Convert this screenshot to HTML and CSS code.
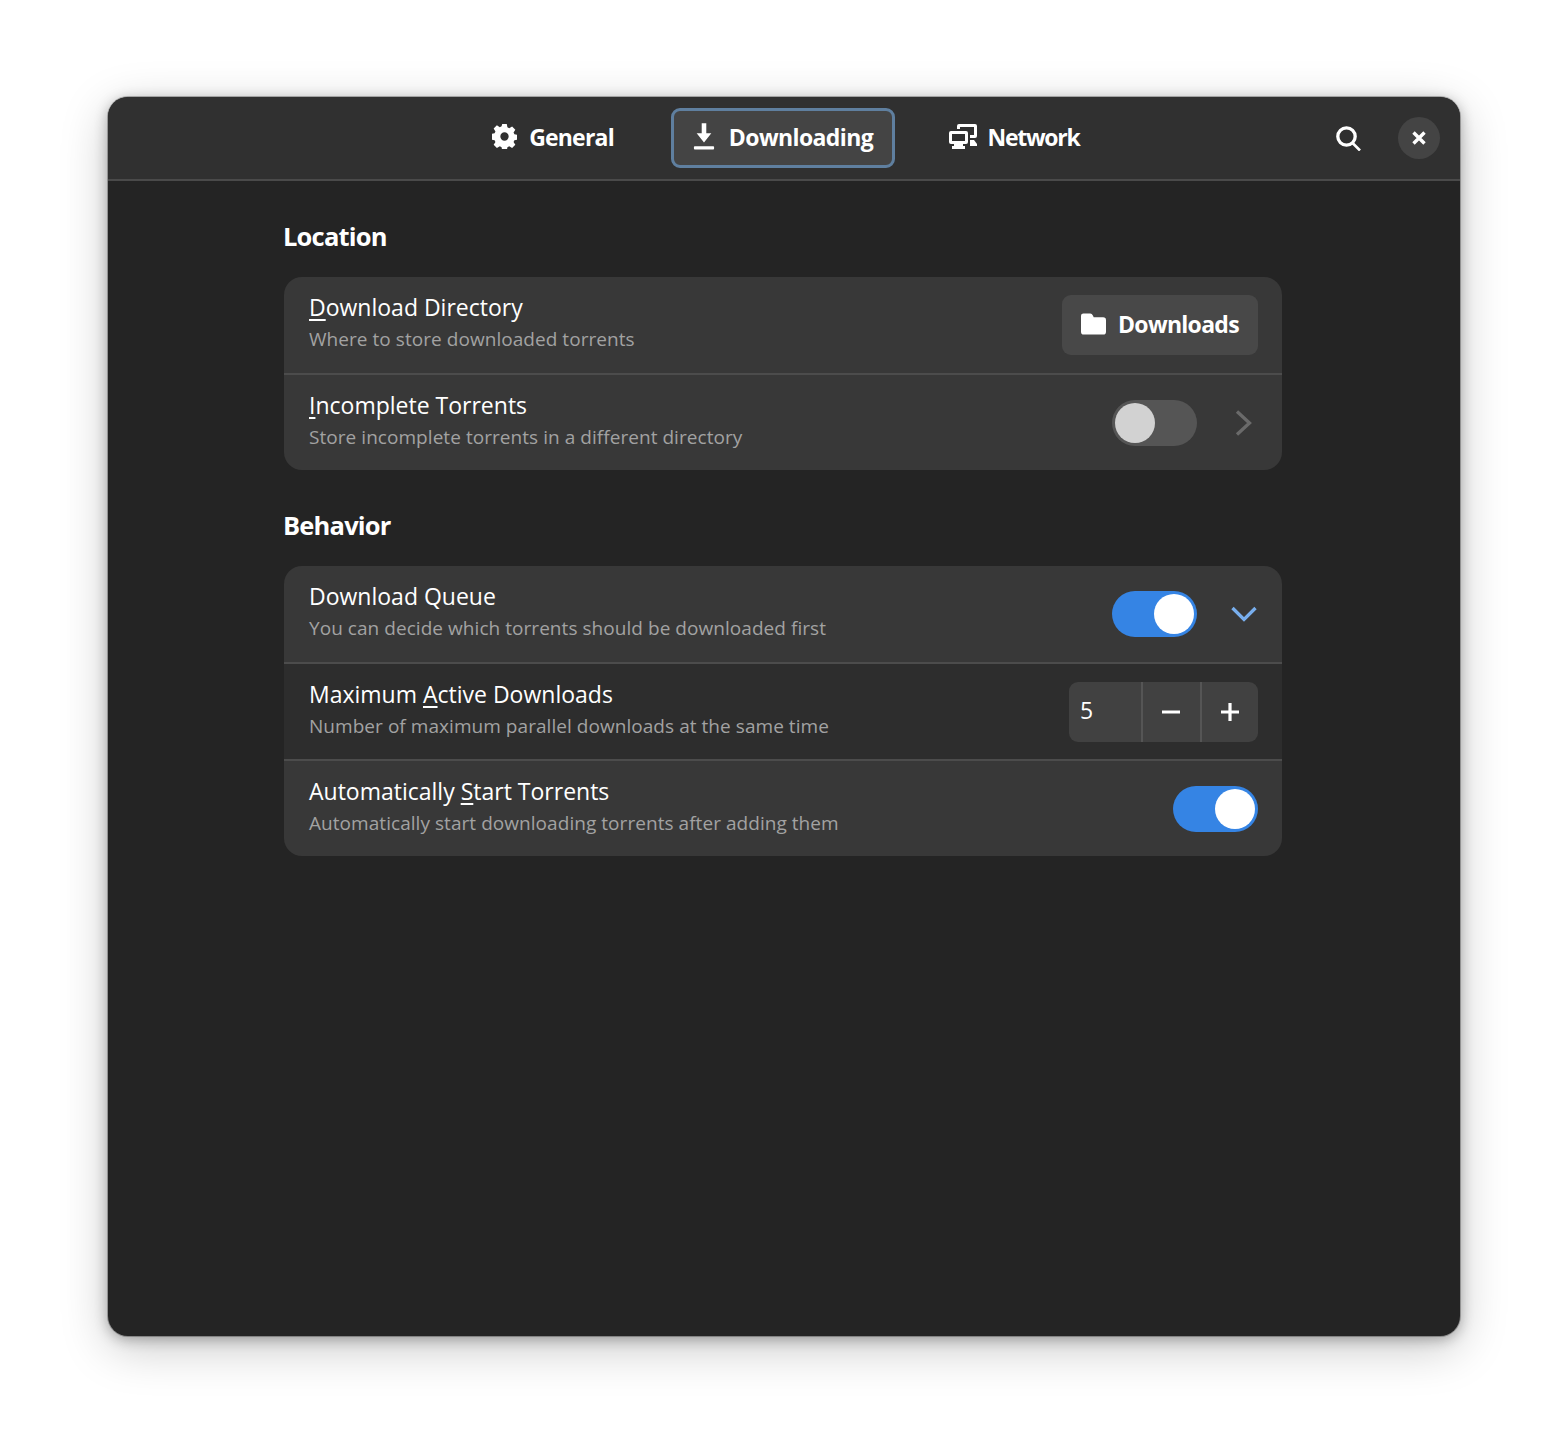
FILE: index.html
```html
<!DOCTYPE html>
<html lang="en">
<head>
    <meta charset="UTF-8">
    <meta name="viewport" content="width=device-width, initial-scale=1.0">
    <title>Preferences</title>
    <link rel="stylesheet" href="styles.css">
</head>
<body>
    <div class="window">
        <header class="headerbar">
            <div class="tabs">
                <button class="tab">
                    <svg class="tab-icon" viewBox="0 0 24 24"><path fill-rule="evenodd" d="M9.8 0h4.4l.6 3.2 1.7.8 2.8-1.7 3.1 3.1-1.7 2.8.8 1.7 3 .6v4.400l-3 .6-.8 1.700 1.700 2.800-3.100 3.100-2.800-1.700-1.700.8-.6 3.300H9.800l-.6-3.300-1.700-.8-2.800 1.700-3.100-3.100 1.700-2.800-.8-1.700-3-.6V9.500l3-.6.8-1.700-1.700-2.800 3.100-3.100 2.800 1.700 1.700-.8zM12 8a4 4 0 1 0 0 8 4 4 0 0 0 0-8z"/></svg>
                    General
                </button>
                <button class="tab tab-active">
                    <svg class="tab-icon" viewBox="0 0 24 30"><path d="M9.500 0h5v11H20L12 21 4 11h5.500z"/><rect x="1" y="25" width="22" height="3.500" rx="1"/></svg>
                    Downloading
                </button>
                <button class="tab tab-net">
                    <svg class="tab-icon tab-icon-net" viewBox="0 0 28 25"><path fill-rule="evenodd" d="M2 7h15a2 2 0 0 1 2 2v9a2 2 0 0 1-2 2h-3v2h2v3H3v-3h2v-2H2a2 2 0 0 1-2-2V9a2 2 0 0 1 2-2zm1 3v7h13v-7z"/><path d="M10 0h16a2 2 0 0 1 2 2v10a2 2 0 0 1-2 2h-5v-3h4V3H11v2H8V2a2 2 0 0 1 2-2zM21 16h4l3 4v2h-7z"/></svg>
                    Network
                </button>
            </div>
            <div class="header-actions">
                <svg class="search-icon" viewBox="0 0 25 25"><circle cx="10.500" cy="10.500" r="8.700"/><path class="search-handle" d="M16.500 17l7.500 7.500"/></svg>
                <button class="close-btn">
                    <svg viewBox="0 0 14 14"><path d="M1.500 1.500l11 11M12.500 1.500l-11 11"/></svg>
                </button>
            </div>
        </header>

        <main class="content">
            <section class="group">
                <h2 class="group-title">Location</h2>
                <div class="card">
                    <div class="row">
                        <div class="row-text">
                            <div class="row-title"><u>D</u>ownload Directory</div>
                            <div class="row-sub">Where to store downloaded torrents</div>
                        </div>
                        <button class="folder-btn">
                            <svg viewBox="0 0 26 22"><path d="M2.500 0h7c1.500 0 2 .7 3 2.500l.7 1.500H23a3 3 0 0 1 3 3v12a3 3 0 0 1-3 3H3a3 3 0 0 1-3-3V2.500A2.500 2.500 0 0 1 2.500 0z"/></svg>
                            Downloads
                        </button>
                    </div>
                    <div class="row">
                        <div class="row-text">
                            <div class="row-title"><u>I</u>ncomplete Torrents</div>
                            <div class="row-sub">Store incomplete torrents in a different directory</div>
                        </div>
                        <div class="switch"><span class="knob"></span></div>
                        <svg class="chevron" viewBox="0 0 26 26"><path d="M6 1.500L18.500 13 6 24.500"/></svg>
                    </div>
                </div>
            </section>

            <section class="group">
                <h2 class="group-title">Behavior</h2>
                <div class="card">
                    <div class="row">
                        <div class="row-text">
                            <div class="row-title">Download Queue</div>
                            <div class="row-sub">You can decide which torrents should be downloaded first</div>
                        </div>
                        <div class="switch switch-on"><span class="knob"></span></div>
                        <svg class="chevron chevron-open" viewBox="0 0 26 26"><path d="M1.500 7L13 18.500 24.500 7"/></svg>
                    </div>
                    <div class="row row-dark">
                        <div class="row-text">
                            <div class="row-title">Maximum <u>A</u>ctive Downloads</div>
                            <div class="row-sub">Number of maximum parallel downloads at the same time</div>
                        </div>
                        <div class="spin">
                            <span class="spin-value">5</span>
                            <span class="spin-btn"><svg viewBox="0 0 18 18"><path d="M0 9h18"/></svg></span>
                            <span class="spin-btn"><svg viewBox="0 0 18 18"><path d="M0 9h18M9 0v18"/></svg></span>
                        </div>
                    </div>
                    <div class="row">
                        <div class="row-text">
                            <div class="row-title">Automatically <u>S</u>tart Torrents</div>
                            <div class="row-sub">Automatically start downloading torrents after adding them</div>
                        </div>
                        <div class="switch switch-on"><span class="knob"></span></div>
                    </div>
                </div>
            </section>
        </main>
    </div>
</body>
</html>
```

FILE: styles.css
```css
* {
    box-sizing: border-box;
}
body {
    margin: 0;
    padding: 97px 108px 118px;
    background: #ffffff;
    font-family: "Open Sans", "Noto Sans", sans-serif;
    color: #ffffff;
}
button {
    font-family: inherit;
    color: inherit;
    border: none;
    background: none;
    padding: 0;
}
u {
    text-underline-offset: 3px;
    text-decoration-thickness: 1.500px;
}
.window {
    height: 1239px;
    background: #242424;
    border-radius: 20px;
    overflow: hidden;
    box-shadow: 0 0 0 1px rgba(0, 0, 0, 0.25), 0 3px 14px rgba(0, 0, 0, 0.3), 0 12px 48px rgba(0, 0, 0, 0.22);
}
.headerbar {
    position: relative;
    height: 84px;
    background: #303030;
    border-bottom: 2px solid #4a4a4a;
    display: flex;
    justify-content: center;
    padding: 11px 2px 0 0;
}
.tabs {
    display: flex;
    gap: 6px;
}
.tab {
    width: 224px;
    height: 60px;
    padding-bottom: 3px;
    display: flex;
    align-items: center;
    justify-content: center;
    gap: 12px;
    border-radius: 9px;
    font-size: 23px;
    font-weight: 700;
    letter-spacing: -0.8px;
}
.tab-active {
    background: #444444;
    border: 3px solid #5f7f9f;
    gap: 14px;
    letter-spacing: -0.6px;
}
.tab-net {
    gap: 11px;
    letter-spacing: -1.300px;
}
.tab-icon {
    width: 25px;
    height: 25px;
    fill: #ffffff;
}
.tab-active .tab-icon {
    width: 22px;
    height: 28px;
}
.tab-icon-net {
    width: 28px;
    margin-left: 2px;
}
.header-actions {
    position: absolute;
    top: 20px;
    right: 20px;
    display: flex;
    align-items: center;
    gap: 37px;
}
.search-icon {
    width: 25px;
    height: 25px;
    fill: none;
    stroke: #ffffff;
    stroke-width: 3.300;
}
.search-handle {
    stroke-width: 2.600;
}
.close-btn {
    width: 42px;
    height: 42px;
    border-radius: 50%;
    background: #444444;
    display: flex;
    align-items: center;
    justify-content: center;
}
.close-btn svg {
    width: 14px;
    height: 14px;
    fill: none;
    stroke: #ffffff;
    stroke-width: 3.400;
}
.content {
    width: 998px;
    margin-left: 176px;
    padding-top: 38px;
}
.group {
    margin-bottom: 38px;
}
.group-title {
    margin: 0 0 21px -1px;
    height: 37px;
    line-height: 35px;
    font-size: 25.500px;
    font-weight: 700;
    letter-spacing: -0.8px;
}
.card {
    background: #383838;
    border-radius: 18px;
    overflow: hidden;
}
.row {
    height: 96px;
    padding: 0 24px 0 25px;
    display: flex;
    align-items: center;
    gap: 32px;
}
.row + .row {
    height: 97px;
    border-top: 2px solid #4c4c4c;
}
.row-dark {
    background: #2d2d2d;
}
.row-text {
    flex: 1;
    margin-top: -4px;
}
.row-title {
    font-size: 23px;
    line-height: 31px;
    margin-bottom: 1px;
}
.row-sub {
    font-size: 19px;
    line-height: 30px;
    color: #a2a2a2;
    letter-spacing: 0.05px;
}
.folder-btn {
    width: 196px;
    height: 60px;
    padding-bottom: 3px;
    background: #484848;
    border-radius: 9px;
    display: flex;
    align-items: center;
    justify-content: center;
    gap: 12px;
    font-size: 23px;
    font-weight: 700;
    letter-spacing: -0.7px;
}
.folder-btn svg {
    width: 25px;
    height: 22px;
    fill: #ffffff;
}
.switch {
    width: 85px;
    height: 46px;
    border-radius: 23px;
    background: #555555;
    padding: 3px;
    display: flex;
}
.switch-on {
    background: #3584e4;
    justify-content: flex-end;
}
.knob {
    width: 40px;
    height: 40px;
    border-radius: 50%;
    background: #d2d2d2;
}
.switch-on .knob {
    background: #ffffff;
}
.chevron {
    width: 26px;
    height: 26px;
    margin: 0 1px 0 2px;
    fill: none;
    stroke: #6a6a6a;
    stroke-width: 3.300;
}
.chevron-open {
    stroke: #78aeed;
}
.spin {
    width: 189px;
    height: 60px;
    background: #414141;
    border-radius: 9px;
    overflow: hidden;
    display: flex;
    align-items: center;
}
.spin-value {
    width: 72px;
    padding: 0 0 3px 11px;
    font-size: 23px;
}
.spin-btn {
    width: 58.500px;
    height: 60px;
    border-left: 2px solid #555555;
    display: flex;
    align-items: center;
    justify-content: center;
}
.spin-btn svg {
    width: 18px;
    height: 18px;
    fill: none;
    stroke: #ffffff;
    stroke-width: 3.200;
}
```
